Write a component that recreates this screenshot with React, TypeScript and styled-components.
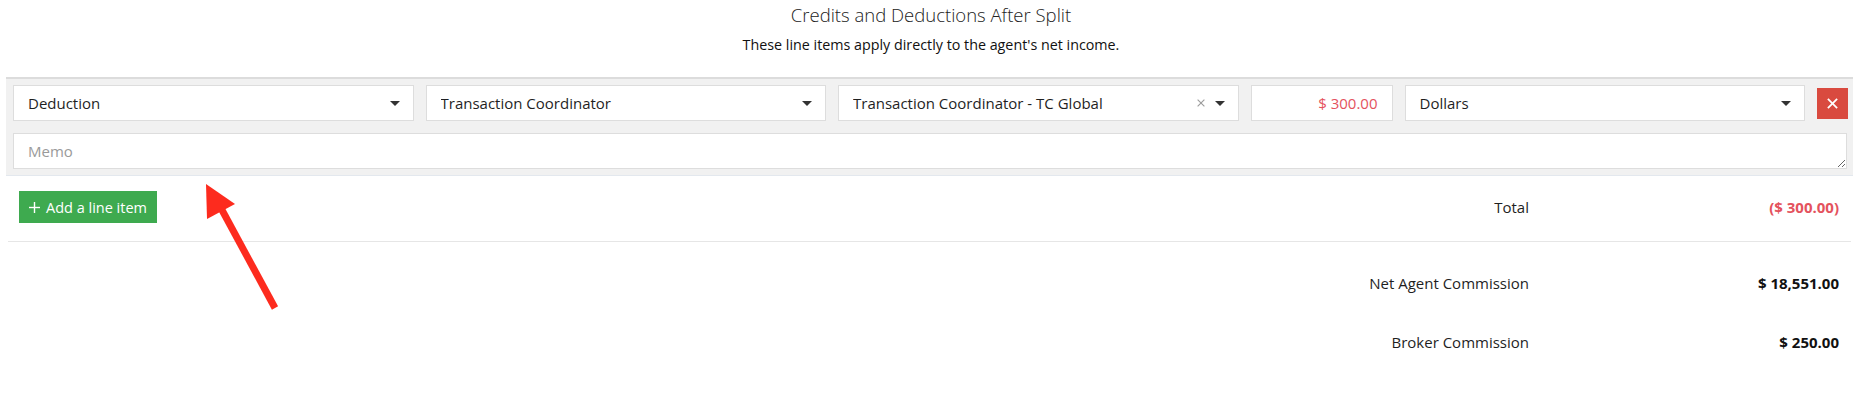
import React from "react";
import styled, { createGlobalStyle } from "styled-components";

const GlobalStyle = createGlobalStyle`
  html, body {
    margin: 0;
    padding: 0;
    background: #ffffff;
  }
  body {
    font-family: "Open Sans", "Noto Sans", Arial, sans-serif;
    color: #222222;
    -webkit-font-smoothing: antialiased;
  }
  * { box-sizing: border-box; }
`;

const Page = styled.div`
  position: relative;
  padding: 0 8px;
  width: 1862px;
  height: 405px;
  overflow: hidden;
`;

const Header = styled.header`
  display: flex;
  flex-direction: column;
  align-items: center;
  padding-top: 1px;
`;

const Title = styled.h2`
  margin: 0;
  font-size: 18.5px;
  line-height: 28px;
  font-weight: 300;
  color: #222;
`;

const Subtitle = styled.p`
  margin: 5px 0 0;
  font-size: 14.3px;
  line-height: 22px;
  font-weight: 400;
  color: #111;
`;

const LineItemPanel = styled.section`
  margin: 21px 1px 0 -2px;
  padding: 6px 5px 6px 7px;
  background: #f1f1f1;
  border-top: 2px solid #dcdcdc;
  border-bottom: 1px solid #e3e8ee;
  display: flex;
  flex-direction: column;
  gap: 12px;
`;

const FieldRow = styled.div`
  display: grid;
  grid-template-columns: 1fr 1fr 1fr 142px 1fr 31px;
  column-gap: 12px;
  align-items: center;
`;

const SelectBox = styled.div`
  height: 36px;
  background: #fff;
  border: 1px solid #dddddd;
  display: flex;
  align-items: center;
  padding: 0 13px 0 14px;
  font-size: 15px;
  color: #1f1f1f;
`;

const SelectValue = styled.span`
  flex: 1;
  white-space: nowrap;
  overflow: hidden;
`;

const ClearMark = styled.span`
  display: flex;
  align-items: center;
  margin-right: 10px;
`;

const AmountBox = styled.div`
  height: 36px;
  background: #fff;
  border: 1px solid #dddddd;
  display: flex;
  align-items: center;
  justify-content: flex-end;
  padding: 0 14px;
  font-size: 15px;
  color: #e4525d;
`;

const RemoveButton = styled.button`
  width: 31px;
  height: 31px;
  border: none;
  padding: 0;
  background: #d94a3f;
  display: flex;
  align-items: center;
  justify-content: center;
  cursor: pointer;
`;

const Memo = styled.textarea`
  display: block;
  width: calc(100% - 1px);
  height: 36px;
  border: 1px solid #dddddd;
  background: #fff;
  padding: 7px 14px;
  font-family: "Open Sans", "Noto Sans", Arial, sans-serif;
  font-size: 15px;
  line-height: 20px;
  color: #222;
  resize: vertical;
  outline: none;
  &::placeholder {
    color: #9a9a9a;
  }
`;

const Rows = styled.div`
  margin-right: 3px;
`;

const TotalRow = styled.div`
  display: grid;
  grid-template-columns: 1fr 307px;
  align-items: center;
  padding: 15px 0 18px 11px;
  border-bottom: 1px solid #e6e6e6;
`;

const LeftCell = styled.div`
  display: flex;
  align-items: center;
  justify-content: space-between;
`;

const AddButton = styled.button`
  height: 32px;
  width: 138px;
  border: none;
  background: #3eaa4f;
  color: #fff;
  font-family: "Open Sans", "Noto Sans", Arial, sans-serif;
  font-size: 14.5px;
  display: flex;
  align-items: center;
  gap: 6px;
  padding: 0 0 0 10px;
  cursor: pointer;
`;

const Label = styled.div`
  font-size: 15px;
  line-height: 21px;
  color: #1f1f1f;
  text-align: right;
  padding-right: 15px;
`;

const Value = styled.div<{ $negative?: boolean }>`
  font-size: 15px;
  line-height: 21px;
  font-weight: 700;
  text-align: right;
  padding-right: 12px;
  color: ${(p) => (p.$negative ? "#e4525d" : "#111")};
`;

const Summary = styled.div`
  padding-top: 12px;
`;

const SummaryRow = styled.div`
  display: grid;
  grid-template-columns: 1fr 307px;
  align-items: center;
  padding: 19px 0;
`;

const Annotation = styled.svg`
  position: absolute;
  left: 0;
  top: 0;
  pointer-events: none;
`;

const Caret = () => (
  <svg width="10" height="5" viewBox="0 0 10 5">
    <polygon points="0,0 10,0 5,5" fill="#333" />
  </svg>
);

const Cross = ({ color, size, width }: { color: string; size: number; width: number }) => (
  <svg width={size} height={size} viewBox="0 0 10 10">
    <line x1="0.8" y1="0.8" x2="9.2" y2="9.2" stroke={color} strokeWidth={width} />
    <line x1="9.2" y1="0.8" x2="0.8" y2="9.2" stroke={color} strokeWidth={width} />
  </svg>
);

const Select = ({ value, clearable }: { value: string; clearable?: boolean }) => (
  <SelectBox>
    <SelectValue>{value}</SelectValue>
    {clearable && (
      <ClearMark>
        <Cross color="#9a9a9a" size={8} width={1.3} />
      </ClearMark>
    )}
    <Caret />
  </SelectBox>
);

export default function App() {
  return (
    <>
      <GlobalStyle />
      <Page>
        <Header>
          <Title>Credits and Deductions After Split</Title>
          <Subtitle>These line items apply directly to the agent's net income.</Subtitle>
        </Header>

        <LineItemPanel>
          <FieldRow>
            <Select value="Deduction" />
            <Select value="Transaction Coordinator" />
            <Select value="Transaction Coordinator - TC Global" clearable />
            <AmountBox>$ 300.00</AmountBox>
            <Select value="Dollars" />
            <RemoveButton aria-label="Remove line item">
              <Cross color="#ffffff" size={11} width={1.6} />
            </RemoveButton>
          </FieldRow>
          <Memo placeholder="Memo" />
        </LineItemPanel>

        <Rows>
          <TotalRow>
            <LeftCell>
              <AddButton>
                <svg width="11" height="11" viewBox="0 0 11 11">
                  <line x1="5.5" y1="0" x2="5.5" y2="11" stroke="#fff" strokeWidth="1.4" />
                  <line x1="0" y1="5.5" x2="11" y2="5.5" stroke="#fff" strokeWidth="1.4" />
                </svg>
                Add a line item
              </AddButton>
              <Label>Total</Label>
            </LeftCell>
            <Value $negative>($ 300.00)</Value>
          </TotalRow>

          <Summary>
            <SummaryRow>
              <Label>Net Agent Commission</Label>
              <Value>$ 18,551.00</Value>
            </SummaryRow>
            <SummaryRow>
              <Label>Broker Commission</Label>
              <Value>$ 250.00</Value>
            </SummaryRow>
          </Summary>
        </Rows>

        <Annotation width="300" height="320" viewBox="0 0 300 320">
          <line x1="222" y1="210" x2="275" y2="308" stroke="#fd2b1e" strokeWidth="7" />
          <polygon points="206,184 235,204 207,219" fill="#fd2b1e" />
        </Annotation>
      </Page>
    </>
  );
}
